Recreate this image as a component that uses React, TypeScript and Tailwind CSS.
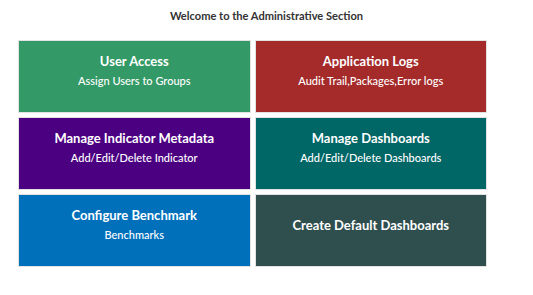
import React from "react";

const tiles = [
  { title: "User Access", sub: "Assign Users to Groups", bg: "bg-[#339966]" },
  { title: "Application Logs", sub: "Audit Trail,Packages,Error logs", bg: "bg-[#a52a2a]" },
  { title: "Manage Indicator Metadata", sub: "Add/Edit/Delete Indicator", bg: "bg-[#4b0082]" },
  { title: "Manage Dashboards", sub: "Add/Edit/Delete Dashboards", bg: "bg-[#006666]" },
  { title: "Configure Benchmark", sub: "Benchmarks", bg: "bg-[#0070bb]" },
  { title: "Create Default Dashboards", sub: "", bg: "bg-[#2f4f4f]" },
];

export default function App() {
  return (
    <div className="w-[533px] h-[295px] bg-white" style={{ fontFamily: "Lato, 'Open Sans', sans-serif" }}>
      <div className="pt-[9px] text-center text-[11.1px] font-bold text-[#333] leading-[14px]">
        Welcome to the Administrative Section
      </div>
      <div className="ml-[18px] mt-[17px] grid w-[469px] grid-cols-2 gap-[4px]">
        {tiles.map((t) => (
          <div
            key={t.title}
            className={`${t.bg} h-[73px] border border-[#e2e2e2] text-center text-white ${t.sub ? "pt-[10px]" : "pt-[20px]"}`}
          >
            <div className="text-[13px] font-bold leading-[20px]">{t.title}</div>
            {t.sub && <div className="text-[11px] font-medium leading-[20px]">{t.sub}</div>}
          </div>
        ))}
      </div>
    </div>
  );
}
